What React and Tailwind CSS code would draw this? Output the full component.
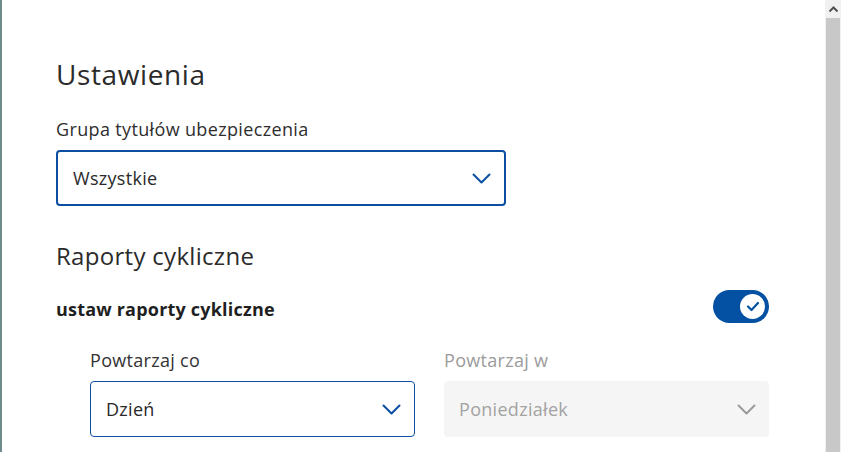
import React from 'react';

function Chevron({ className }) {
  return (
    <svg width="19" height="11" viewBox="0 0 19 11" fill="none" className={className}>
      <path d="M1.5 1.5l8 8 8-8" stroke="currentColor" strokeWidth="2" strokeLinecap="round" strokeLinejoin="round" />
    </svg>
  );
}

function Select({ value, active, disabled }) {
  return (
    <div
      className={
        'flex h-[56px] items-center justify-between rounded-[4px] pl-[15px] pr-[13px] ' +
        (disabled
          ? 'bg-[#f5f5f5] text-[#a3a3a3]'
          : active
          ? 'border-2 border-[#0b4ea2] bg-white text-[#292929]'
          : 'border border-[#0b4ea2] bg-white text-[#292929]')
      }
    >
      <span className="text-[18px] leading-6 tracking-[0.3px]">{value}</span>
      <Chevron className={disabled ? 'text-[#9a9a9a]' : 'text-[#0b4ea2]'} />
    </div>
  );
}

function Toggle() {
  return (
    <div className="flex h-[33px] w-[56px] items-center justify-end rounded-full bg-[#0450a3] pr-[4px]">
      <div className="flex h-[25px] w-[25px] items-center justify-center rounded-full bg-white">
        <svg width="14" height="11" viewBox="0 0 14 11" fill="none">
          <path d="M2 5.5l3.5 3.5L12 2" stroke="#0450a3" strokeWidth="2.2" strokeLinecap="round" strokeLinejoin="round" />
        </svg>
      </div>
    </div>
  );
}

export default function App() {
  return (
    <div className="flex h-[452px] w-[841px] overflow-hidden bg-white font-['Open_Sans',sans-serif]">
      <div className="w-[2px] bg-[#6f8b8c]" />
      <div className="flex-1 pl-[54px] pr-[56px] pt-[56px]">
        <h1 className="text-[28px] leading-[36px] tracking-[0.6px] text-[#2b2b2b]">Ustawienia</h1>

        <div className="mt-[25px] text-[18px] leading-6 tracking-[0.35px] text-[#2e2e2e]">Grupa tytułów ubezpieczenia</div>
        <div className="mt-[9px] w-[450px]">
          <Select value="Wszystkie" active />
        </div>

        <h2 className="mt-[35px] text-[24px] leading-[30px] tracking-[0.3px] text-[#2b2b2b]">Raporty cykliczne</h2>

        <div className="mt-[18px] flex h-[34px] items-center justify-between">
          <span className="pt-[6px] text-[18px] font-bold leading-6 tracking-[0.2px] text-[#1f1f1f]">ustaw raporty cykliczne</span>
          <Toggle />
        </div>

        <div className="mt-[25px] grid grid-cols-2 gap-x-[29px] pl-[34px]">
          <div>
            <div className="text-[18px] leading-6 tracking-[0.3px] text-[#333333]">Powtarzaj co</div>
            <div className="mt-[9px]">
              <Select value="Dzień" />
            </div>
          </div>
          <div>
            <div className="text-[18px] leading-6 tracking-[0.3px] text-[#9b9b9b]">Powtarzaj w</div>
            <div className="mt-[9px]">
              <Select value="Poniedziałek" disabled />
            </div>
          </div>
        </div>
      </div>
      <div className="flex w-[16px] flex-col bg-[#f1f1f1]">
        <div className="flex h-[18px] items-center justify-center">
          <svg width="9" height="6" viewBox="0 0 9 6">
            <path d="M0.5 5.5L4.5 1.5L8.5 5.5" stroke="#505050" strokeWidth="2" fill="none" />
          </svg>
        </div>
        <div className="mx-[1px] flex-1 bg-[#c8c8c8]" />
      </div>
    </div>
  );
}
